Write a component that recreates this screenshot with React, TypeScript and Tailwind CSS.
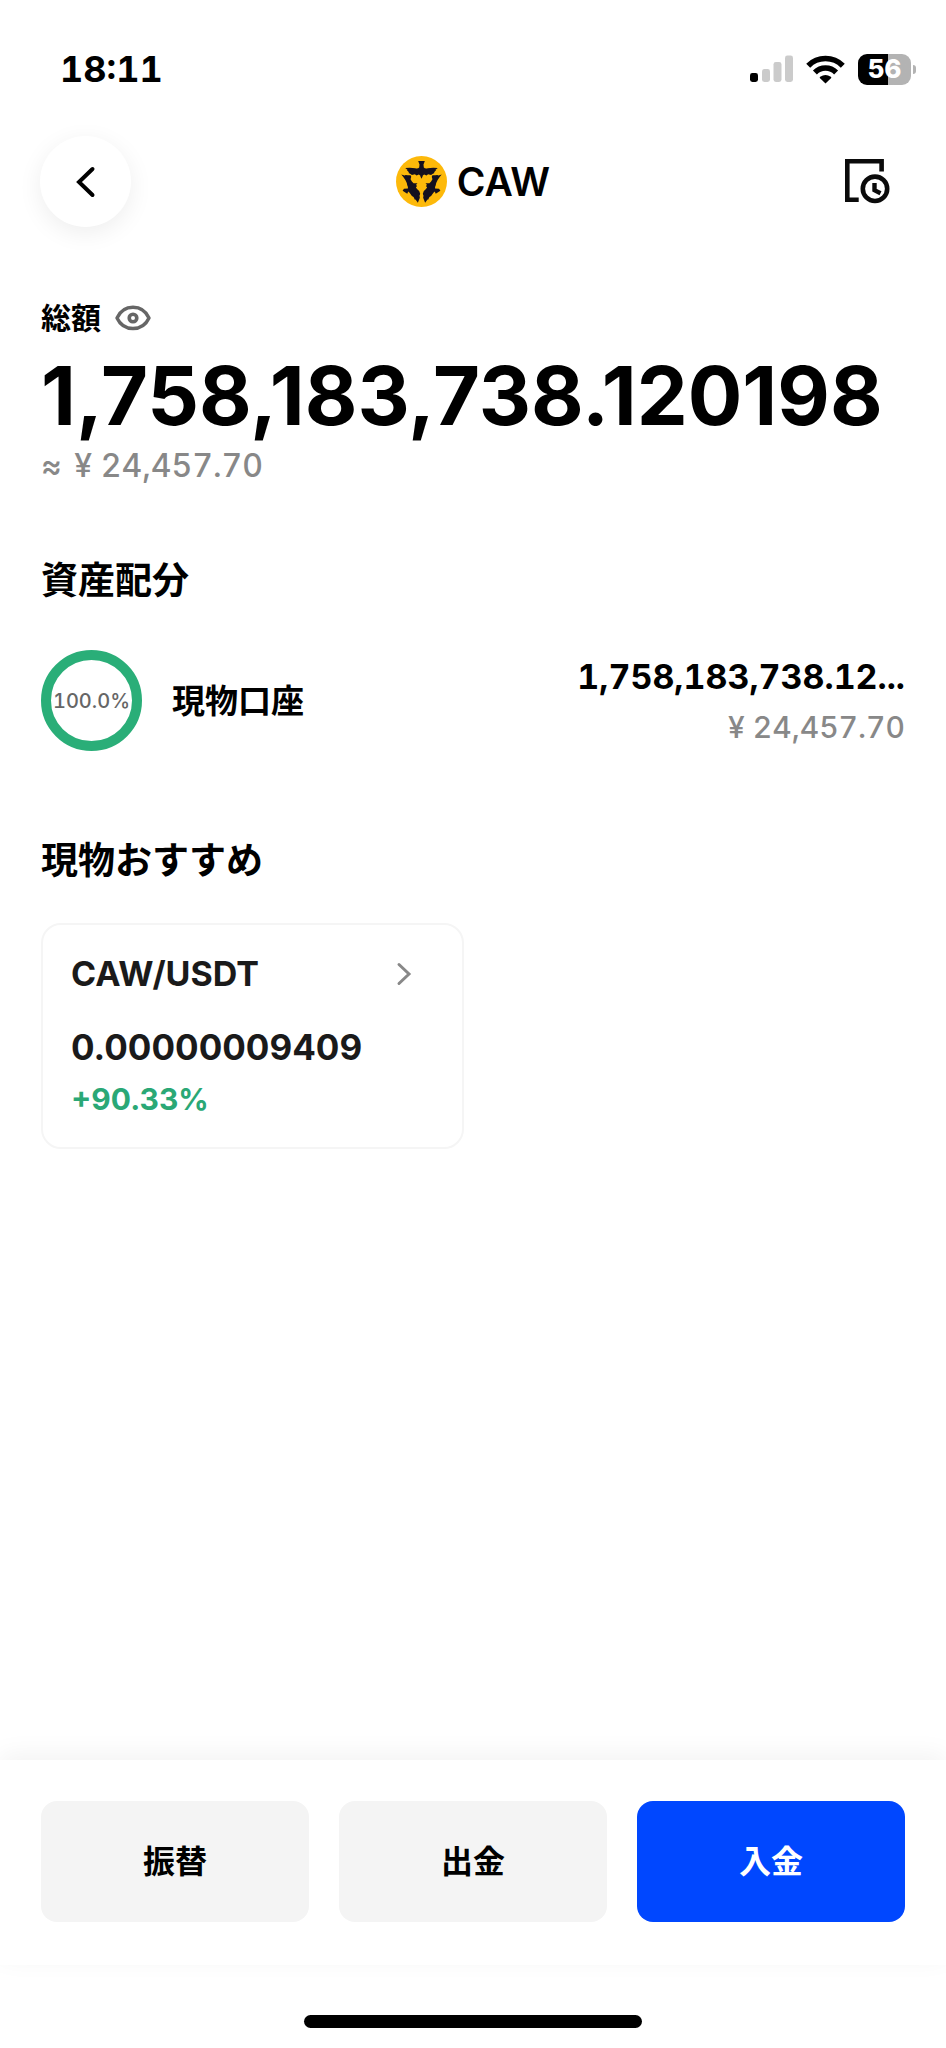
const TOP_BIRD =
  "M67 15H87L83 26L84 35Q88 39 96 37Q108 34 126 36L119 42L121 43L115 49L116 51L110 54L106 57L97 55L92 59L85 56L81 59L80 63L77 69L74 63L73 59L69 56L62 59L57 55L48 57L44 54L38 51L39 49L33 43L35 42L28 36Q46 34 58 37Q66 39 70 35L71 26Z";

const SIDE_BIRD =
  "M16 56L26 59L29 57L36 58L44 58L46 63L44 70L48 77L53 82L65 82L61 86L63 91L60 95L65 101L70 106L73 114L71 120L72 126L66 141L59 131L57 132L53 124L48 121L41 111L37 107L34 114L20 105L24 99L36 98Q37 94 34 88Q32 74 16 56Z";

function CawLogo() {
  return (
    <svg viewBox="0 0 154 154" className="size-[51px]" aria-hidden="true">
      <circle cx="77" cy="77" r="77" fill="#fdb90a" />
      <g fill="#14101f">
        <path d={TOP_BIRD} />
        <path d={SIDE_BIRD} />
        <path d={SIDE_BIRD} transform="matrix(-1 0 0 1 154 0)" />
      </g>
    </svg>
  );
}

function StatusBar() {
  return (
    <div className="flex h-[136px] items-center justify-between pt-[2px] pr-[30px] pl-[60px]">
      <span className="text-[36px] leading-10 font-bold tabular-nums">18:11</span>
      <div className="flex items-center">
        <svg viewBox="0 0 43 28" className="mr-[13px] h-7 w-[43px]" aria-label="電波">
          <rect x="0" y="18" width="8" height="9" rx="2.4" fill="#000" />
          <rect x="12" y="14" width="8" height="13" rx="2.4" fill="#cbcbcb" />
          <rect x="23.5" y="7" width="8" height="20" rx="2.4" fill="#cbcbcb" />
          <rect x="35" y="0.5" width="8" height="26.5" rx="2.4" fill="#cbcbcb" />
        </svg>
        <svg viewBox="0 0 39 29" className="mr-[13px] h-[29px] w-[39px]" aria-label="Wi-Fi">
          <g fill="none" stroke="#000" strokeWidth="5.6">
            <path d="M2.2 10.7A24.5 24.5 0 0 1 36.8 10.7" />
            <path d="M8.9 17.4A15 15 0 0 1 30.1 17.4" />
          </g>
          <path d="M19.5 28.6L13.8 22.9Q13.5 22.3 14.2 21.8Q19.5 18.2 24.8 21.8Q25.5 22.3 25.2 22.9Z" />
        </svg>
        <div className="flex items-center gap-[2px]">
          <div className="flex h-[31px] w-[53px] items-center justify-center rounded-[9px] bg-linear-to-r from-black from-57% to-[#b3b3b3] to-57%">
            <span className="text-[26px] leading-8 font-extrabold text-white">56</span>
          </div>
          <div className="h-[9px] w-[3px] rounded-r-full bg-[#b3b3b3]" />
        </div>
      </div>
    </div>
  );
}

function Header() {
  return (
    <header className="grid grid-cols-[1fr_auto_1fr] items-center px-10">
      <button
        type="button"
        aria-label="戻る"
        className="flex size-[91px] items-center justify-center rounded-full bg-white shadow-[0_6px_24px_rgba(0,0,0,0.07)]"
      >
        <svg viewBox="0 0 32 32" className="size-8" fill="none" stroke="#000" strokeWidth="4" strokeLinecap="round">
          <path d="M22.5 3L9 16L22.5 29" />
        </svg>
      </button>
      <h1 className="flex items-center gap-[10px] text-[39px] leading-[48px] font-semibold">
        <CawLogo />
        CAW
      </h1>
      <button type="button" aria-label="履歴" className="mr-4 justify-self-end">
        <svg viewBox="0 0 45 45" className="size-[45px]" fill="none" stroke="#0b0b0b">
          <path d="M13.7 40.7H2.3V2.3H36.6V12.5" strokeWidth="4.6" />
          <circle cx="30" cy="29.8" r="12.2" strokeWidth="4.6" />
          <path d="M29.5 24V31.2L35.5 34.2" strokeWidth="4.4" />
        </svg>
      </button>
    </header>
  );
}

function Eye() {
  return (
    <svg viewBox="0 0 36 26" className="h-[26px] w-9" fill="none" stroke="#666">
      <path d="M2 13C5 6.5 11 2.3 18 2.3S31 6.5 34 13C31 19.5 25 23.5 18 23.5S5 19.5 2 13Z" strokeWidth="3.4" strokeLinejoin="round" />
      <circle cx="18" cy="13" r="3.8" strokeWidth="3.6" />
    </svg>
  );
}

export default function App() {
  return (
    <div
      lang="ja"
      className="flex min-h-screen flex-col bg-white font-['Inter','Noto_Sans_CJK_JP',sans-serif] text-black"
    >
      <StatusBar />
      <Header />
      <main className="px-[41px]">
        <section className="pt-[73px]">
          <div className="flex items-center gap-[14px]">
            <h2 className="text-[30px] leading-9 font-bold">総額</h2>
            <button type="button" aria-label="残高を隠す">
              <Eye />
            </button>
          </div>
          <p className="mt-5 text-[81px] leading-[80px] font-bold">1,758,183,738.120198</p>
          <p className="mt-[10px] text-[32px] leading-10 font-medium text-[#888] tabular-nums">
            <span className="mr-1">≈</span> ¥ 24,457.70
          </p>
        </section>

        <section className="pt-[71px]">
          <h2 className="text-[37px] leading-[48px] font-bold">資産配分</h2>
          <div className="mt-[45px] flex items-center">
            <div className="flex size-[101px] shrink-0 items-center justify-center rounded-full border-10 border-[#2aae78]">
              <span className="text-[20px] leading-6 font-medium text-[#666] tabular-nums">100.0%</span>
            </div>
            <span className="ml-[30px] text-[33px] leading-10 font-bold">現物口座</span>
            <div className="ml-auto pt-[2px] text-right tabular-nums">
              <p className="text-[34px] leading-10 font-bold">1,758,183,738.12...</p>
              <p className="mt-[10px] text-[30px] leading-10 font-medium text-[#888]">¥ 24,457.70</p>
            </div>
          </div>
        </section>

        <section className="pt-[86px]">
          <h2 className="text-[37px] leading-[48px] font-bold">現物おすすめ</h2>
          <a
            href="#caw-usdt"
            className="mt-[38px] block w-[49%] rounded-[20px] border-2 border-[#f5f5f5] px-7 pt-[29px] pb-[30px] text-[#1a1a1a]"
          >
            <div className="flex items-center justify-between pr-[22px]">
              <span className="text-[34px] leading-10 font-bold">CAW/USDT</span>
              <svg viewBox="0 0 16 24" className="h-6 w-4" fill="none" stroke="#888" strokeWidth="3" strokeLinecap="round">
                <path d="M3 2.5L13 12L3 21.5" />
              </svg>
            </div>
            <p className="mt-[33px] text-[35px] leading-10 font-bold">0.00000009409</p>
            <p className="mt-[14px] text-[30px] leading-9 font-bold text-[#2aa876]">+90.33%</p>
          </a>
        </section>
      </main>

      <footer className="mt-auto">
        <div className="grid grid-cols-3 gap-[30px] bg-white px-[41px] pt-[41px] pb-[43px] shadow-[0_-6px_24px_rgba(0,0,0,0.05)]">
          <button type="button" className="h-[121px] rounded-2xl bg-[#f4f4f4] text-[32px] font-bold">
            振替
          </button>
          <button type="button" className="h-[121px] rounded-2xl bg-[#f4f4f4] text-[32px] font-bold">
            出金
          </button>
          <button type="button" className="h-[121px] rounded-2xl bg-[#0047ff] text-[32px] font-bold text-white">
            入金
          </button>
        </div>
        <div className="flex h-[83px] items-end justify-center pb-5">
          <div className="h-[13px] w-[338px] rounded-full bg-black" />
        </div>
      </footer>
    </div>
  );
}
